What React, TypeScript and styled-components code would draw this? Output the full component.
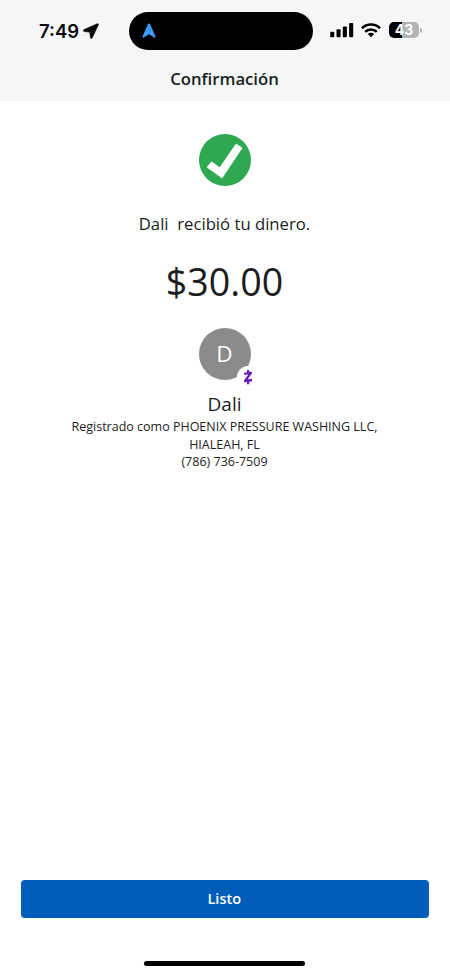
import React from 'react';
import styled, { createGlobalStyle } from 'styled-components'

const GlobalStyle = createGlobalStyle`
  * {
    box-sizing: border-box;
  }
  body {
    margin: 0;
    background-color: #ffffff;
    font-family: 'Open Sans', sans-serif;
    color: #1b1d22;
  }
`
const Screen = styled.div`
  width: 450px;
  height: 974px;
  display: flex;
  flex-direction: column;
  overflow: hidden;
`
const Header = styled.header`
  height: 101px;
  background-color: #f4f6f8;
`
const StatusBar = styled.div`
  height: 62px;
  padding: 12px 28px 12px 39px;
  display: flex;
  align-items: center;
`
const Clock = styled.div`
  width: 90px;
  display: flex;
  align-items: center;
  gap: 4px;
  font-family: Inter, sans-serif;
  font-size: 18.5px;
  font-weight: 600;
  line-height: 38px;
  color: #0b0b0d;
`
const Island = styled.div`
  width: 184px;
  height: 38px;
  padding-left: 13px;
  display: flex;
  align-items: center;
  border-radius: 19px;
  background-color: #000000;
`
const StatusIcons = styled.div`
  margin-left: 17px;
  display: flex;
  align-items: center;
  gap: 7px;
`
const BatteryGroup = styled.div`
  display: flex;
  align-items: center;
  gap: 1px;
  margin: -2px 0 0 1px;
`
const Battery = styled.div`
  width: 30px;
  height: 16px;
  border-radius: 5px;
  background: linear-gradient(to right, #000000 43%, #b4b4b6 43%);
  color: #ffffff;
  font-family: Inter, sans-serif;
  font-size: 14px;
  font-weight: 700;
  line-height: 16px;
  text-align: center;
`
const BatteryTip = styled.div`
  width: 2px;
  height: 5px;
  border-radius: 0 2px 2px 0;
  background-color: #b4b4b6;
`
const Title = styled.h1`
  margin: 5px 1px 0 0;
  font-size: 16.7px;
  font-weight: 600;
  line-height: 24px;
  text-align: center;
`
const Content = styled.main`
  flex: 1;
  padding: 33px 1px 0 0;
  display: flex;
  flex-direction: column;
  align-items: center;
`
const Message = styled.p`
  margin: 25px 0 0;
  font-size: 16.7px;
  line-height: 26px;
  white-space: pre;
`
const Amount = styled.p`
  margin: 20px 0 0;
  font-size: 37.6px;
  line-height: 50px;
`
const Avatar = styled.div`
  position: relative;
  width: 52px;
  height: 52px;
  margin-top: 21px;
  border-radius: 50%;
  background-color: #8b8b8c;
  color: #ffffff;
  font-size: 22.5px;
  line-height: 51px;
  text-align: center;
`
const ZelleBadge = styled.div`
  position: absolute;
  left: 38px;
  top: 38px;
  width: 22px;
  height: 22px;
  display: flex;
  align-items: center;
  justify-content: center;
  border-radius: 50%;
  background-color: #ffffff;
`
const Name = styled.h2`
  margin: 11px 0 0;
  font-size: 19px;
  font-weight: 400;
  line-height: 26px;
`
const Details = styled.p`
  margin: 1px 0 0;
  font-size: 12.5px;
  line-height: 17.6px;
  text-align: center;
`
const Footer = styled.footer`
  padding: 0 21.5px 8.5px 21px;
  display: flex;
  flex-direction: column;
  align-items: center;
`
const DoneButton = styled.button`
  width: 100%;
  height: 37.5px;
  padding: 0 1px 1px 0;
  border: none;
  border-radius: 4px;
  background-color: #005eb8;
  color: #ffffff;
  font-family: 'Open Sans', sans-serif;
  font-size: 14.5px;
  font-weight: 600;
`
const HomeIndicator = styled.div`
  width: 161px;
  height: 5px;
  margin-top: 43px;
  border-radius: 3px;
  background-color: #000000;
`

const App: React.FC = () => {
  return (
    <Screen>
      <GlobalStyle />
      <Header>
        <StatusBar>
          <Clock>
            7:49
            <svg width="16" height="16" viewBox="0 0 16 16">
              <path d="M14.2.8 1 6.6c-1 .5-.8 1.8.3 1.9l5.5.7.6 5.3c.1 1.1 1.4 1.3 1.9.3L15.3 1.9c.4-.8-.3-1.5-1.1-1.1z" fill="#0b0b0d" stroke="#0b0b0d" strokeWidth="0.6" />
            </svg>
          </Clock>
          <Island>
            <svg width="14" height="16" viewBox="0 0 14 16">
              <path d="M5.9 1.1.5 13.5c-.3.9.5 1.5 1.2 1L7 11.2l5.3 3.3c.7.5 1.5-.1 1.2-1L8.1 1.1c-.4-.9-1.8-.9-2.2 0z" fill="#3d9bf5" />
            </svg>
          </Island>
          <StatusIcons>
            <svg width="24" height="16" viewBox="0 0 24 16">
              <rect x="0.2" y="8.7" width="4.1" height="5.5" rx="1" />
              <rect x="6.5" y="6.3" width="4.1" height="7.9" rx="1" />
              <rect x="12.8" y="3.4" width="4.1" height="10.8" rx="1" />
              <rect x="19.1" y="0.1" width="4.1" height="14.1" rx="1" />
            </svg>
            <svg width="20" height="16" viewBox="0 0 20 16">
              <g fill="none" stroke="#000000" strokeWidth="2.7">
                <path d="M1 5.2a12.8 12.8 0 0 1 18 0" />
                <path d="M4.2 8.9a8.2 8.2 0 0 1 11.6 0" />
              </g>
              <path d="M10 14.2 6.8 11a4.6 4.6 0 0 1 6.4 0z" />
            </svg>
            <BatteryGroup>
              <Battery>43</Battery>
              <BatteryTip />
            </BatteryGroup>
          </StatusIcons>
        </StatusBar>
        <Title>Confirmación</Title>
      </Header>
      <Content>
        <svg width="52" height="52" viewBox="0 0 52 52">
          <circle cx="26" cy="26" r="26" fill="#2ea952" />
          <path
            d="M12.6 28.2 20.9 34.2 37.2 10.4 42.6 14.1 22.9 43.6 8.6 33.2z"
            fill="#ffffff"
            stroke="#ffffff"
            strokeWidth="1.2"
            strokeLinejoin="round"
          />
        </svg>
        <Message>{'Dali  recibió tu dinero.'}</Message>
        <Amount>$30.00</Amount>
        <Avatar>
          D
          <ZelleBadge>
            <svg width="12" height="16" viewBox="0 0 12 16">
              <g fill="none" stroke="#6a1bb8" strokeWidth="2.3">
                <path d="M2.2 4.9 9 3.9 3 12 10 11" strokeLinejoin="round" />
                <path d="M6.1 1v3.4M6.1 11.8v3.4" />
              </g>
            </svg>
          </ZelleBadge>
        </Avatar>
        <Name>Dali</Name>
        <Details>
          Registrado como PHOENIX PRESSURE WASHING LLC,
          <br />
          HIALEAH, FL
          <br />
          (786) 736-7509
        </Details>
      </Content>
      <Footer>
        <DoneButton>Listo</DoneButton>
        <HomeIndicator />
      </Footer>
    </Screen>
  );
};

export default App;
